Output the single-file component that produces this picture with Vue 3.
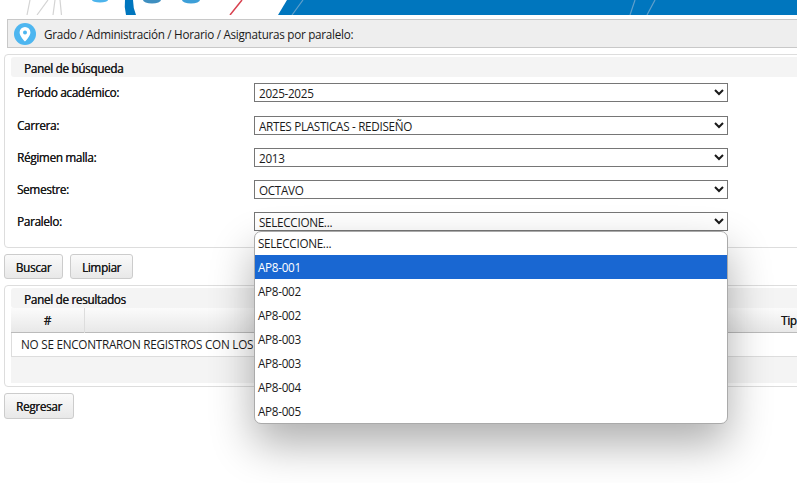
<script setup>
const filters = [
  { label: 'Período académico:', value: '2025-2025' },
  { label: 'Carrera:', value: 'ARTES PLASTICAS - REDISEÑO' },
  { label: 'Régimen malla:', value: '2013' },
  { label: 'Semestre:', value: 'OCTAVO' },
  { label: 'Paralelo:', value: 'SELECCIONE...' }
]

const paralelos = ['SELECCIONE...', 'AP8-001', 'AP8-002', 'AP8-002', 'AP8-003', 'AP8-003', 'AP8-004', 'AP8-005']
</script>

<template>
  <div class="page">
    <svg class="banner" width="797" height="15" viewBox="0 0 797 15">
      <g stroke="#d4d4d4" stroke-width="1.2" fill="none">
        <path d="M30 0 27 15M48 0 37 15M55 0 53 15M60 0 61.5 15" />
      </g>
      <ellipse cx="100" cy="0" rx="8" ry="2.5" fill="#4db4ec" />
      <ellipse cx="152" cy="0" rx="9" ry="3.5" fill="#3f8fc0" />
      <ellipse cx="191" cy="0" rx="9" ry="3.5" fill="#3d9fd8" />
      <path d="M125 0h8q0 8 3 15h-10q-2-8-1-15z" fill="#0076be" />
      <path d="M242 0 230 15" stroke="#d8404e" stroke-width="1.5" fill="none" />
      <path d="M287 0H797V15H278z" fill="#0076be" />
      <path d="M303 0 292 15M635 0 630 15M655 0 647 15" stroke="#5f9fcb" stroke-width="1.2" fill="none" />
    </svg>

    <div class="crumb">
      <svg class="pin" width="22" height="22" viewBox="0 0 22 22">
        <circle cx="11" cy="11" r="11" fill="#4db6f0" />
        <path d="M11 4a5.400 5.400 0 0 0-5.400 5.400C5.600 13 11 18.500 11 18.500s5.400-5.500 5.400-9.100A5.400 5.400 0 0 0 11 4z" fill="#fff" />
        <circle cx="11" cy="9.500" r="2" fill="#4db6f0" />
      </svg>
      <span>Grado / Administración / Horario / Asignaturas por paralelo:</span>
    </div>

    <section class="panel search">
      <h2 class="panel-title">Panel de búsqueda</h2>
      <div class="filters">
        <div v-for="f in filters" :key="f.label" class="filter">
          <label>{{ f.label }}</label>
          <select>
            <option>{{ f.value }}</option>
          </select>
        </div>
      </div>
    </section>

    <div class="actions">
      <button class="btn-buscar">Buscar</button>
      <button class="btn-limpiar">Limpiar</button>
    </div>

    <section class="panel results">
      <h2 class="panel-title">Panel de resultados</h2>
      <div class="thead">
        <div class="th-num">#</div>
        <div class="th-main"></div>
        <div class="th-tipo">Tipo</div>
      </div>
      <div class="empty">NO SE ENCONTRARON REGISTROS CON LOS</div>
      <div class="tfoot"></div>
    </section>

    <div class="actions back">
      <button class="btn-regresar">Regresar</button>
    </div>

    <ul class="dropdown">
      <li v-for="(p, i) in paralelos" :key="i" :class="{ active: i === 1 }">{{ p }}</li>
    </ul>
  </div>
</template>

<style scoped>
.page {
  position: relative;
  width: 850px;
  height: 483px;
  background: #fff;
  font-family: "Open Sans", "Noto Sans", sans-serif;
  font-size: 11.7px;
  letter-spacing: -0.3px;
  color: #1a1a1a;
}

.banner {
  display: block;
}

.crumb {
  display: flex;
  align-items: center;
  gap: 8px;
  box-sizing: border-box;
  height: 29px;
  margin: 4px 0 0 7px;
  padding-left: 6px;
  background: #eee;
  border: 1px solid #c8c8c8;
  border-right: none;
  letter-spacing: -0.27px;
}

.panel {
  box-sizing: border-box;
  margin-left: 4px;
  padding: 2px 0 0 6px;
  border: 1px solid #ddd;
  border-radius: 4px;
}

.search {
  height: 194px;
  margin-top: 6px;
}

.panel-title {
  box-sizing: border-box;
  height: 20px;
  margin: 0;
  padding-left: 13px;
  background: #f4f4f4;
  border-radius: 3px 0 0 3px;
  font-size: 11.7px;
  font-weight: 400;
  line-height: 23px;
  text-shadow: 0.35px 0 0 currentColor;
}

.filters {
  margin-top: 6px;
  margin-left: 6px;
}

.filter {
  display: flex;
  align-items: center;
  height: 19px;
  margin-bottom: 13px;
}

.filter:first-child {
  margin-bottom: 14px;
}

.filter label {
  width: 237px;
  padding-bottom: 2px;
  text-shadow: 0.25px 0 0 currentColor;
}

select {
  width: 474px;
  height: 19px;
  padding: 0;
  background: #fff;
  border: 1px solid #767676;
  border-radius: 0;
  font-family: inherit;
  font-size: 11.7px;
  letter-spacing: -0.3px;
  color: #1a1a1a;
}

.actions {
  display: flex;
  gap: 7px;
  margin: 6px 0 0 4px;
}

button {
  box-sizing: border-box;
  height: 25px;
  padding: 0;
  background: linear-gradient(#fafafa, #e8e8e8);
  border: 1px solid #ccc;
  border-radius: 3px;
  font-family: inherit;
  font-size: 11.7px;
  letter-spacing: -0.3px;
  text-shadow: 0.25px 0 0 currentColor;
  color: #1a1a1a;
}

.btn-buscar {
  width: 59px;
}

.btn-limpiar {
  width: 63px;
}

.btn-regresar {
  width: 70px;
  height: 26px;
}

.results {
  height: 102px;
  margin-top: 6px;
}

.thead {
  display: grid;
  grid-template-columns: 74px 696px 1fr;
  height: 25px;
  background: linear-gradient(#fbfbfb, #e8e8e8);
  border-bottom: 1px solid #bbb;
  box-sizing: border-box;
  line-height: 25px;
  text-shadow: 0.25px 0 0 currentColor;
}

.th-num {
  text-align: center;
  border-right: 1px solid #ddd;
}

.empty {
  box-sizing: border-box;
  height: 24px;
  padding-left: 9px;
  border-left: 1px solid #ddd;
  border-bottom: 1px solid #ddd;
  line-height: 23px;
  letter-spacing: -0.24px;
}

.tfoot {
  height: 26px;
  background: #f4f4f4;
}

.back {
  margin-top: 6px;
}

.dropdown {
  position: absolute;
  left: 254px;
  top: 231px;
  box-sizing: border-box;
  width: 474px;
  height: 193px;
  margin: 0;
  padding: 0;
  list-style: none;
  overflow: hidden;
  background: #fff;
  border: 1px solid #aaa;
  border-radius: 7px;
  box-shadow: 0 20px 44px rgba(0, 0, 0, 0.32);
}

.dropdown li {
  box-sizing: border-box;
  height: 24px;
  padding-left: 3px;
  line-height: 24px;
}

.dropdown li:first-child {
  height: 23px;
  line-height: 23px;
}

.dropdown li.active {
  background: #1967d2;
  color: #fff;
}
</style>

<style>
html,
body {
  margin: 0;
  overflow: hidden;
}
</style>
